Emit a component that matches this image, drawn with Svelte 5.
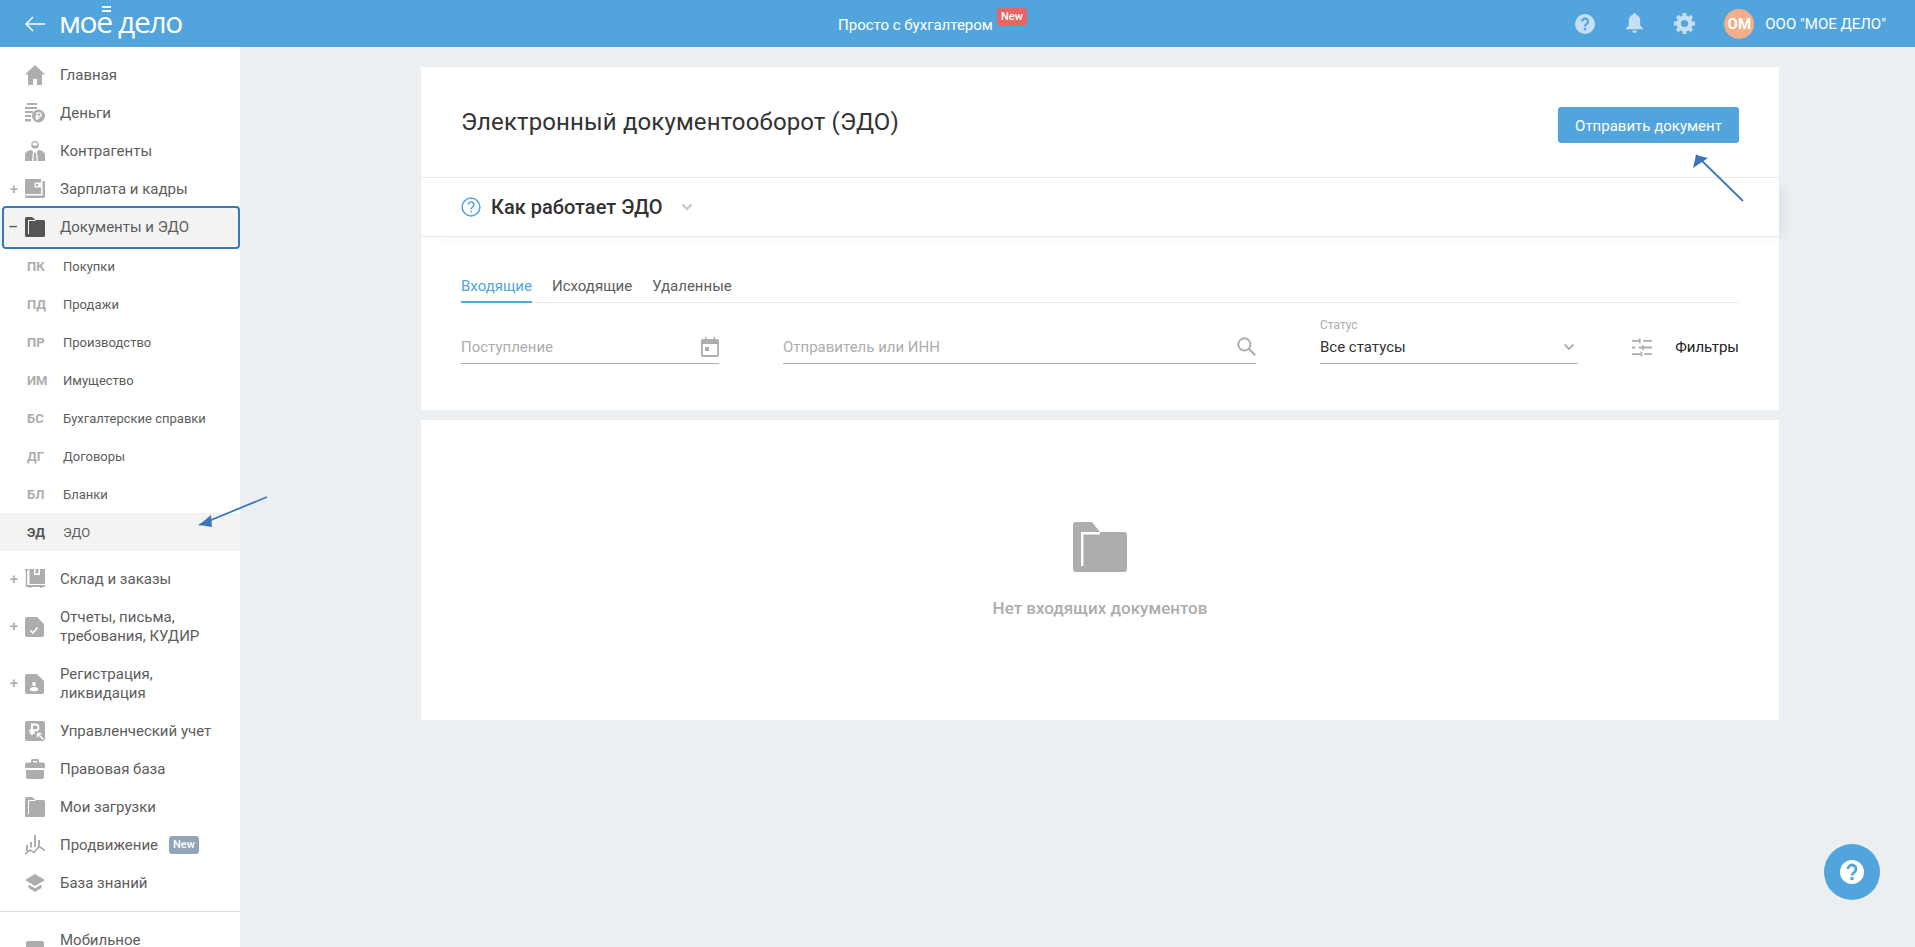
<script>
  const top = [
    { label: 'Главная', icon: 'home' },
    { label: 'Деньги', icon: 'money' },
    { label: 'Контрагенты', icon: 'person' },
    { label: 'Зарплата и кадры', icon: 'wallet', sign: '+' }
  ];
  const subs = [
    ['ПК', 'Покупки'], ['ПД', 'Продажи'], ['ПР', 'Производство'], ['ИМ', 'Имущество'],
    ['БС', 'Бухгалтерские справки'], ['ДГ', 'Договоры'], ['БЛ', 'Бланки'], ['ЭД', 'ЭДО']
  ];
  const rest = [
    { label: 'Склад и заказы', icon: 'store', sign: '+' },
    { label: 'Отчеты, письма, требования, КУДИР', icon: 'doccheck', sign: '+', tall: true },
    { label: 'Регистрация, ликвидация', icon: 'docperson', sign: '+', tall: true },
    { label: 'Управленческий учет', icon: 'rub' },
    { label: 'Правовая база', icon: 'case' },
    { label: 'Мои загрузки', icon: 'folder' },
    { label: 'Продвижение', icon: 'chart', badge: 'New' },
    { label: 'База знаний', icon: 'cap' }
  ];
</script>

{#snippet icon(name)}
  <svg class="nav-icon" viewBox="0 0 20 20" aria-hidden="true">
    {#if name === 'home'}
      <path d="M10 0 0 9.500h3V19a1 1 0 0 0 1 1h4v-6h4v6h4a1 1 0 0 0 1-1V9.500h3z" />
    {:else if name === 'money'}
      <path d="M2 0h10v2H2zM0 4h12v2H0zM0 8h8v2H0zM0 12h6v2H0zM0 16h6v2.500H0z" />
      <circle cx="13.500" cy="13" r="6.500" />
      <path d="M12 9.500V17M12 9.800h2.300a1.800 1.800 0 0 1 0 3.700H10.500M10.500 15.300h4" fill="none" stroke="#fff" stroke-width="1.300" />
    {:else if name === 'person'}
      <circle cx="10" cy="3.800" r="3.800" />
      <ellipse cx="10" cy="3" rx="2.600" ry="1.800" fill="#fff" />
      <path d="M0 20v-6c0-3 3-4.500 6.500-5L8 10.500 7 20zM20 20v-6c0-3-3-4.500-6.500-5L12 10.500l1 9.500zM9 11.500h2l.6 8.500H8.400z" />
    {:else if name === 'wallet'}
      <path d="M1 0h15v15H1a1 1 0 0 1-1-1V1a1 1 0 0 1 1-1z" />
      <path d="M0 15.500a1 1 0 0 0 1 .9h16.600V2H19a1 1 0 0 1 1 1v15a1 1 0 0 1-1 1H1.500A1.500 1.500 0 0 1 0 17.500z" />
      <path d="M9.500 3.500H16v5H9.500z" fill="#fff" />
      <circle cx="12" cy="6" r="1.300" />
    {:else if name === 'store'}
      <path d="M0 0h3.500v1.500H2.200V16H20v2h-2.500a1.400 1.400 0 0 1-2.700 0H6.500a1.400 1.400 0 0 1-2.700 0H.8V1.500H0z" />
      <path d="M4.500 0H20v15H4.500z" />
      <path d="M9 0h6v6H9z" fill="#fff" />
      <path d="M10.500 0h3v4.500h-3z" />
    {:else if name === 'doccheck'}
      <path d="M2 0h10l7 7v11a2 2 0 0 1-2 2H2a2 2 0 0 1-2-2V2a2 2 0 0 1 2-2z" />
      <path d="m5.500 13.500 2.500 2.500 4.500-5.500" fill="none" stroke="#fff" stroke-width="1.700" />
    {:else if name === 'docperson'}
      <path d="M2 0h10l7 7v11a2 2 0 0 1-2 2H2a2 2 0 0 1-2-2V2a2 2 0 0 1 2-2z" />
      <circle cx="9" cy="10" r="1.900" fill="#fff" />
      <path d="M4.500 15.500c1-2 2.500-2.600 4.500-2.600s3.500.6 4.500 2.600c-1 1.300-2.500 1.800-4.500 1.800s-3.500-.5-4.500-1.800z" fill="#fff" />
    {:else if name === 'rub'}
      <path d="M2 0h16a2 2 0 0 1 2 2v16a2 2 0 0 1-2 2H2a2 2 0 0 1-2-2V2a2 2 0 0 1 2-2z" />
      <path d="M7 14V3.500h3.500a2.900 2.900 0 0 1 0 5.800H4.500M4.500 11.500h5.500" fill="none" stroke="#fff" stroke-width="2" />
      <path d="M12.500 12.500h4M12.500 12.500v4M12.500 12.500l6 6" fill="none" stroke="#fff" stroke-width="1.500" />
    {:else if name === 'case'}
      <path d="M6 3.500V1.500A1.500 1.500 0 0 1 7.500 0h5A1.500 1.500 0 0 1 14 1.500v2h4a2 2 0 0 1 2 2V9H0V5.500a2 2 0 0 1 2-2zm2 0h4V2H8zM1 11h18v7a2 2 0 0 1-2 2H3a2 2 0 0 1-2-2z" />
    {:else if name === 'folder'}
      <path d="M1.500 0H7l3.500 3h8A1.500 1.500 0 0 1 20 4.500v14a1.500 1.500 0 0 1-1.500 1.500h-17A1.500 1.500 0 0 1 0 18.500v-17A1.500 1.500 0 0 1 1.500 0z" />
      <path d="M3 3h7.500v1H4v13H3z" fill="#fff" />
    {:else if name === 'chart'}
      <path d="M5 7h2v5.500H5zM9 0h2v12H9zM13 5h2v6h-2zM1 10h2v6H1z" />
      <path d="m0 19 5-4 4 2.500 5-6 6 4" fill="none" stroke="#adadad" stroke-width="1.700" />
    {:else if name === 'cap'}
      <path d="M10 1 0 7l10 6 10-6z" />
      <path d="M3.500 11.500V15l6.500 4 6.500-4v-3.500L10 15.300z" />
    {/if}
  </svg>
{/snippet}

{#snippet navRow(item)}
  <a class="nav-row" class:tall={item.tall} href="#top">
    <span class="sign">{item.sign ?? ''}</span>
    {@render icon(item.icon)}
    <span class="nav-label">{item.label}</span>
    {#if item.badge}<span class="nav-badge">{item.badge}</span>{/if}
  </a>
{/snippet}

{#snippet blueArrow(x1, y1, x2, y2, hx1, hy1, hx2, hy2)}
  <svg class="annot" viewBox="0 0 1915 947" aria-hidden="true">
    <line {x1} {y1} {x2} {y2} stroke="#3b78b8" stroke-width="1.800" />
    <polygon points="{x2},{y2} {hx1},{hy1} {hx2},{hy2}" fill="#3b78b8" />
  </svg>
{/snippet}

<div class="page">
  <header class="topbar">
    <div class="brand">
      <svg class="back" viewBox="0 0 22 16" aria-hidden="true">
        <path d="M21 8H2M9 1 2 8l7 7" fill="none" stroke="#fff" stroke-width="1.500" />
      </svg>
      <span class="logo"><span class="e">мое<i></i></span> дело</span>
    </div>
    <div class="promo">
      <span>Просто с бухгалтером</span><span class="promo-badge">New</span>
    </div>
    <div class="tools">
      <svg class="tool" viewBox="0 0 20 20" aria-hidden="true">
        <circle cx="10" cy="10" r="10" fill="#c5e0f5" />
        <path d="M7 7.500a3 3 0 1 1 4.800 2.400c-1 .8-1.800 1.300-1.800 2.600" fill="none" stroke="#52a5dc" stroke-width="2.200" />
        <rect x="8.800" y="14" width="2.400" height="2.400" fill="#52a5dc" />
      </svg>
      <svg class="tool bell" viewBox="0 0 18 22" aria-hidden="true">
        <path d="M9 0a1.500 1.500 0 0 1 1.500 1.800C13.500 2.500 15 5 15 8v5l3 3v1H0v-1l3-3V8c0-3 1.500-5.500 4.500-6.200A1.500 1.500 0 0 1 9 0zM6.500 18.500h5a2.500 2.500 0 0 1-5 0z" fill="#c5e0f5" />
      </svg>
      <svg class="tool gear" viewBox="0 0 20 20" aria-hidden="true">
        <circle cx="10" cy="10" r="5.500" fill="none" stroke="#c5e0f5" stroke-width="4.200" />
        <path d="M10 0v20M0 10h20M3 3l14 14M17 3 3 17" stroke="#c5e0f5" stroke-width="3.600" stroke-dasharray="3.500 13 3.500" />
      </svg>
      <span class="avatar">ОМ</span>
      <span class="company">ООО "МОЕ ДЕЛО"</span>
    </div>
  </header>

  <div class="body">
    <nav class="sidebar">
      {#each top as item}{@render navRow(item)}{/each}
      <a class="nav-row open" href="#top">
        <span class="sign dark">–</span>
        <svg class="nav-icon dark-icon" viewBox="0 0 20 20" aria-hidden="true">
          <path d="M1.500 0H7l3.500 3h8A1.500 1.500 0 0 1 20 4.500v14a1.500 1.500 0 0 1-1.500 1.500h-17A1.500 1.500 0 0 1 0 18.500v-17A1.500 1.500 0 0 1 1.500 0z" />
          <path d="M3 3h7.500v1H4v13H3z" fill="#f3f3f3" />
        </svg>
        <span class="nav-label">Документы и ЭДО</span>
      </a>
      <div class="subs">
        {#each subs as [code, label], i}
          <a class="sub-row" class:current={i === subs.length - 1} href="#top">
            <span class="code">{code}</span><span class="sub-label">{label}</span>
          </a>
        {/each}
      </div>
      {#each rest as item}{@render navRow(item)}{/each}
      <hr class="side-rule" />
      <a class="nav-row tall" href="#top">
        <span class="sign"></span>
        <svg class="nav-icon" viewBox="0 0 20 20" aria-hidden="true">
          <path d="M3 1h14a2 2 0 0 1 2 2v15a2 2 0 0 1-2 2H3a2 2 0 0 1-2-2V3a2 2 0 0 1 2-2z" />
        </svg>
        <span class="nav-label">Мобильное<br />приложение</span>
      </a>
    </nav>

    <main class="main">
      <section class="card head-card">
        <div class="title-row">
          <h1>Электронный документооборот (ЭДО)</h1>
          <button class="send" type="button">Отправить документ</button>
        </div>
        <div class="how">
          <svg class="how-icon" viewBox="0 0 20 20" aria-hidden="true">
            <circle cx="10" cy="10" r="8.900" fill="none" stroke="#52a5dc" stroke-width="1.500" />
            <path d="M7.300 7.800a2.800 2.800 0 1 1 4.300 2.300c-1 .7-1.600 1.200-1.600 2.400" fill="none" stroke="#52a5dc" stroke-width="1.500" />
            <rect x="9.200" y="13.900" width="1.600" height="1.600" fill="#52a5dc" />
          </svg>
          <span class="how-text">Как работает ЭДО</span>
          <svg class="chev how-chev" viewBox="0 0 12 8" aria-hidden="true">
            <path d="m1.500 1.500 4.500 4.500 4.500-4.500" fill="none" stroke="#c4c4c4" stroke-width="2" />
          </svg>
        </div>
        <div class="tabs-wrap">
          <div class="tabs">
            <span class="tab active">Входящие</span>
            <span class="tab">Исходящие</span>
            <span class="tab">Удаленные</span>
          </div>
          <div class="filters">
            <div class="field date">
              <span class="placeholder">Поступление</span>
              <svg class="field-icon" viewBox="0 0 18 20" aria-hidden="true">
                <path d="M4 0h1.500v2h7V0H14v2h2a2 2 0 0 1 2 2v14a2 2 0 0 1-2 2H2a2 2 0 0 1-2-2V4a2 2 0 0 1 2-2h2zM1.800 7v11h14.400V7zM4 10h4v4H4z" fill="#adadad" fill-rule="evenodd" />
              </svg>
            </div>
            <div class="field search">
              <span class="placeholder">Отправитель или ИНН</span>
              <svg class="field-icon" viewBox="0 0 18 18" aria-hidden="true">
                <circle cx="7" cy="7" r="5.800" fill="none" stroke="#adadad" stroke-width="1.800" />
                <path d="m11.200 11.200 6 6" stroke="#adadad" stroke-width="2" />
              </svg>
            </div>
            <div class="field status">
              <span class="float-label">Статус</span>
              <span class="value">Все статусы</span>
              <svg class="chev" viewBox="0 0 12 8" aria-hidden="true">
                <path d="m1.500 1.500 4.500 4.500 4.500-4.500" fill="none" stroke="#adadad" stroke-width="1.800" />
              </svg>
            </div>
            <div class="filter-btn">
              <svg class="sliders" viewBox="0 0 18 16" preserveAspectRatio="none" aria-hidden="true">
                <path d="M0 2.500h7M10 2.500h8M7 .5v4M0 8h3M6 8h12M10 6v4M0 13.500h8M11 13.500h7M8.500 11.500v4" stroke="#adadad" stroke-width="1.500" fill="none" />
              </svg>
              <span>Фильтры</span>
            </div>
          </div>
        </div>
      </section>

      <section class="card empty">
        <svg class="empty-icon" viewBox="0 0 54 50" aria-hidden="true">
          <path d="M3 0h16l8 10h24a3 3 0 0 1 3 3v34a3 3 0 0 1-3 3H3a3 3 0 0 1-3-3V3a3 3 0 0 1 3-3z" fill="#adadad" />
          <path d="M8 10h19v2.500H10.500V44H8z" fill="#fff" />
        </svg>
        <p>Нет входящих документов</p>
      </section>
    </main>
  </div>

  <div class="outline"></div>
  {@render blueArrow(1743, 201, 1696, 155, 1693, 168, 1708, 158)}
  {@render blueArrow(267, 497, 199, 525, 211, 515, 212, 527)}

  <button class="help" type="button" aria-label="Помощь">
    <svg viewBox="0 0 24 24" aria-hidden="true">
      <circle cx="12" cy="12" r="12" fill="#fff" />
      <path d="M8 9a4 4 0 1 1 6.400 3.200c-1.400 1-2.400 1.600-2.400 3.300" fill="none" stroke="#52a5dc" stroke-width="2.800" />
      <rect x="10.500" y="17" width="3" height="3" fill="#52a5dc" />
    </svg>
  </button>
</div>

<style>
  :global(body) {
    margin: 0;
    font-family: Roboto, "Liberation Sans", sans-serif;
    background: #ebeff2;
    overflow: hidden;
  }

  .page {
    width: 1915px;
    height: 947px;
    overflow: hidden;
    display: flex;
    flex-direction: column;
    position: relative;
  }

  .topbar {
    flex: 0 0 47px;
    background: #52a5dc;
    display: grid;
    grid-template-columns: 1fr auto 1fr;
    align-items: center;
    color: #fff;
  }

  .brand {
    display: flex;
    align-items: center;
    padding-left: 24px;
    gap: 13px;
  }

  .back {
    width: 22px;
    height: 16px;
  }

  .logo {
    font-family: "Open Sans", sans-serif;
    font-size: 30px;
    line-height: 30px;
    font-weight: 500;
    letter-spacing: -1.400px;
    white-space: nowrap;
    margin-top: -3px;
  }

  .e {
    position: relative;
  }

  .e i {
    position: absolute;
    right: 1px;
    top: 5px;
    width: 9px;
    height: 2px;
    border-top: 2px solid #fff;
    border-bottom: 2px solid #fff;
  }

  .promo {
    display: flex;
    align-items: flex-start;
    font-size: 15px;
    line-height: 20px;
    gap: 4px;
    padding: 2px 50px 0 0;
  }

  .promo-badge {
    background: #e96464;
    border-radius: 3px;
    font-size: 11px;
    font-weight: 500;
    line-height: 17px;
    height: 18px;
    width: 30px;
    text-align: center;
    margin-top: -7px;
  }

  .tools {
    display: flex;
    align-items: center;
    justify-content: flex-end;
    padding-right: 29px;
  }

  .tool {
    width: 20px;
    height: 20px;
    margin-right: 31px;
  }

  .tool.bell {
    width: 17px;
    height: 21px;
  }

  .tool.gear {
    width: 21px;
    height: 21px;
    margin-right: 29px;
  }

  .avatar {
    width: 30px;
    height: 30px;
    border-radius: 50%;
    background: #f5ae8a;
    font-size: 15px;
    font-weight: 700;
    line-height: 30px;
    text-align: center;
    margin-right: 11px;
  }

  .company {
    font-size: 15px;
  }

  .body {
    flex: 1;
    display: flex;
    min-height: 0;
  }

  .sidebar {
    flex: 0 0 240px;
    background: #fff;
    padding-top: 9px;
    overflow: hidden;
  }

  .nav-row {
    display: flex;
    align-items: center;
    height: 38px;
    text-decoration: none;
    color: #5d5d5d;
    font-size: 15px;
    line-height: 19px;
  }

  .nav-row.tall {
    height: 57px;
  }

  .nav-row.open {
    background: #f3f3f3;
  }

  .sign {
    width: 25px;
    flex: none;
    text-align: right;
    padding-right: 7px;
    box-sizing: border-box;
    color: #adadad;
    font-size: 15px;
    font-weight: 500;
  }

  .sign.dark {
    color: #555;
  }

  .nav-icon {
    width: 20px;
    height: 20px;
    flex: none;
    fill: #adadad;
    margin-right: 15px;
  }

  .dark-icon {
    fill: #555;
  }

  .nav-label {
    max-width: 170px;
  }

  .nav-badge {
    margin-left: 11px;
    background: #92a4b8;
    color: #fff;
    border-radius: 3px;
    font-size: 11px;
    font-weight: 500;
    width: 30px;
    height: 18px;
    line-height: 17px;
    text-align: center;
  }

  .subs {
    margin-top: 1px;
    padding-bottom: 9px;
  }

  .sub-row {
    display: flex;
    align-items: center;
    height: 38px;
    text-decoration: none;
    color: #5d5d5d;
    font-size: 13px;
  }

  .sub-row.current {
    background: #f3f3f3;
  }

  .code {
    width: 63px;
    padding-left: 27px;
    box-sizing: border-box;
    font-weight: 700;
    color: #adadad;
    flex: none;
  }

  .current .code {
    color: #555;
  }

  .side-rule {
    border: 0;
    border-top: 1px solid #d9d9d9;
    margin: 9px 0 9px;
  }

  .main {
    flex: 1;
    padding: 20px 136px 0 181px;
    display: flex;
    flex-direction: column;
    gap: 10px;
  }

  .card {
    background: #fff;
  }

  .head-card {
    height: 343px;
    box-sizing: border-box;
    position: relative;
  }

  .title-row {
    display: flex;
    justify-content: space-between;
    align-items: flex-start;
    height: 111px;
    box-sizing: border-box;
    padding: 40px 40px 0;
    border-bottom: 1px solid #e8e8e8;
  }

  h1 {
    margin: -1px 0 0;
    font-size: 24px;
    font-weight: 400;
    letter-spacing: 0.13px;
    color: #333;
    line-height: 32px;
  }

  .send {
    width: 181px;
    height: 36px;
    background: #52a5dc;
    border: 0;
    border-radius: 3px;
    color: #fff;
    font: 15px/36px Roboto, sans-serif;
  }

  .how {
    height: 59px;
    box-sizing: border-box;
    padding: 0 40px;
    display: flex;
    align-items: center;
    border-bottom: 1px solid #e8e8e8;
    box-shadow: 10px 4px 14px -8px rgba(40, 60, 80, 0.12);
    background: #fff;
    position: relative;
  }

  .how-icon {
    width: 20px;
    height: 20px;
    margin-right: 10px;
  }

  .how-text {
    font-size: 20px;
    font-weight: 500;
    color: #333;
  }

  .how-chev {
    margin-left: 18px;
  }

  .chev {
    width: 12px;
    height: 8px;
    flex: none;
  }

  .tabs-wrap {
    padding: 33px 40px 0;
  }

  .tabs {
    display: flex;
    gap: 20px;
    border-bottom: 1px solid #e8e8e8;
    height: 33px;
    box-sizing: border-box;
    font-size: 15px;
    color: #5d5d5d;
  }

  .tab {
    height: 33px;
    line-height: 32px;
    box-sizing: border-box;
  }

  .tab.active {
    color: #52a5dc;
    border-bottom: 2px solid #52a5dc;
  }

  .filters {
    display: flex;
    align-items: flex-end;
    margin-top: 9px;
  }

  .field {
    height: 52px;
    box-sizing: border-box;
    border-bottom: 1px solid #adadad;
    display: flex;
    align-items: flex-end;
    justify-content: space-between;
    padding-bottom: 6px;
    font-size: 15px;
    line-height: 20px;
    position: relative;
  }

  .date {
    width: 258px;
    margin-right: 64px;
  }

  .search {
    width: 473px;
    margin-right: 64px;
  }

  .status {
    width: 258px;
  }

  .placeholder {
    color: #adadad;
  }

  .field-icon {
    width: 18px;
    height: 20px;
  }

  .search .field-icon {
    width: 19px;
    height: 19px;
    margin-bottom: 1px;
  }

  .float-label {
    position: absolute;
    left: 0;
    top: 6px;
    font-size: 12px;
    line-height: 14px;
    color: #adadad;
  }

  .value {
    color: #333;
  }

  .status .chev {
    margin: 0 3px 6px 0;
  }

  .filter-btn {
    flex: 1;
    display: flex;
    justify-content: flex-end;
    align-items: center;
    gap: 23px;
    font-size: 15px;
    color: #222;
    padding-bottom: 7px;
    line-height: 20px;
  }

  .sliders {
    width: 20px;
    height: 19px;
  }

  .empty {
    height: 300px;
    display: flex;
    flex-direction: column;
    align-items: center;
    padding-top: 102px;
    box-sizing: border-box;
  }

  .empty-icon {
    width: 54px;
    height: 50px;
  }

  .empty p {
    margin: 26px 0 0;
    font-size: 17px;
    font-weight: 500;
    line-height: 20px;
    color: #adadad;
  }

  .outline {
    position: absolute;
    left: 2px;
    top: 206px;
    width: 238px;
    height: 43px;
    box-sizing: border-box;
    border: 2.500px solid #3b78b8;
    border-radius: 4px;
    pointer-events: none;
  }

  .annot {
    position: absolute;
    inset: 0;
    width: 1915px;
    height: 947px;
    pointer-events: none;
  }

  .help {
    position: absolute;
    left: 1824px;
    top: 844px;
    width: 56px;
    height: 56px;
    border: 0;
    padding: 16px;
    border-radius: 50%;
    background: #52a5dc;
    box-sizing: border-box;
  }

  .help svg {
    display: block;
    width: 24px;
    height: 24px;
  }
</style>
